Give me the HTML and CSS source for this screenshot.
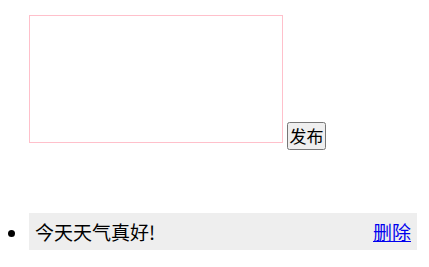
FILE: index.html
```html
<!DOCTYPE html>
<html lang="zh-CN">
<head>
<meta charset="utf-8">
<title>发布</title>
<link rel="stylesheet" href="styles.css">
</head>
<body>
<div class="composer">
  <textarea class="input"></textarea>
  <button class="publish">发布</button>
</div>
<ul class="list">
  <li class="item"><div class="row"><span class="text">今天天气真好!</span><a class="del" href="#">删除</a></div></li>
</ul>
</body>
</html>
```
FILE: styles.css
```css
body {
  margin: 8px;
  font-family: "Noto Sans CJK SC", "Noto Sans", sans-serif;
  background: #fff;
}
.composer {
  display: flex;
  align-items: flex-end;
  gap: 4px;
  margin: 7px 0 0 21px;
}
.input {
  box-sizing: border-box;
  width: 254px;
  height: 128px;
  border: 1px solid pink;
  margin: 0 0 7px 0;
  padding: 2px;
  resize: none;
  outline: none;
}
.publish {
  box-sizing: border-box;
  width: 39px;
  height: 28px;
  font-family: "Noto Sans CJK SC", sans-serif;
  font-size: 17px;
  line-height: 24px;
  padding: 0;
  color: #000;
}
.list {
  margin: 63px 4px 0 0;
  padding-left: 21px;
  font-size: 19px;
}
.item {
  background: #eeeeee;
}
.row {
  display: flex;
  justify-content: space-between;
  align-items: center;
  height: 37px;
  padding: 0 6px 0 6px;
  line-height: 27px;
}
.del {
  color: #0000ee;
}
```
